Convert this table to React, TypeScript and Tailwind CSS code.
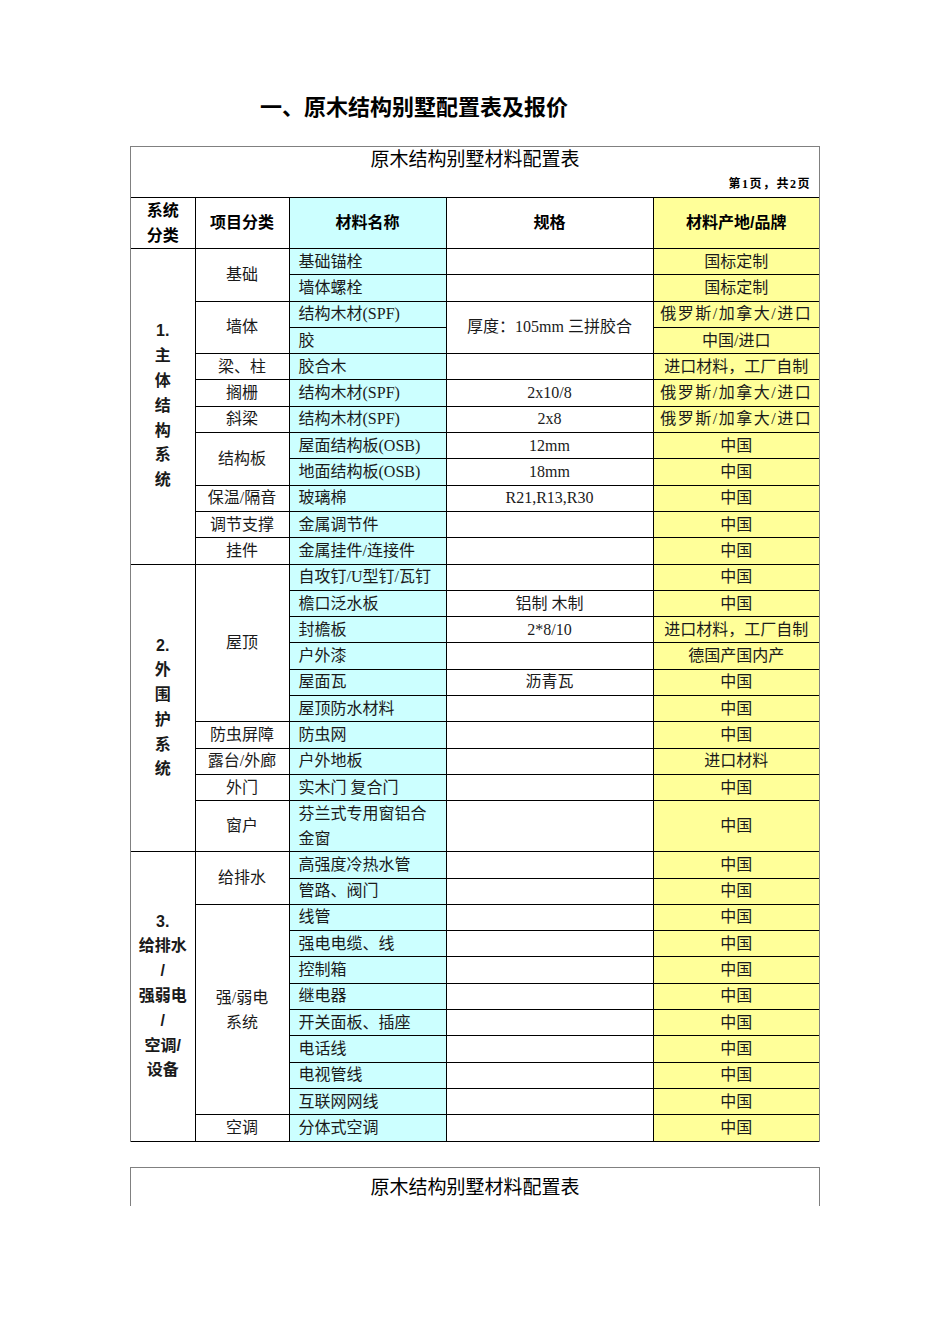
import React from "react";

const FONT = "font-['Liberation_Serif','Noto_Sans_CJK_SC',serif]";
const HEI = "font-['Liberation_Sans','Noto_Sans_CJK_SC',sans-serif]";

const td = "border border-black p-0 align-middle";
const c2 = `${td} text-center`;
const c3 = `${td} bg-[#ccffff] text-left pl-[9px]`;
const c4 = `${td} text-center`;
const c5 = `${td} border-r-0 bg-[#ffff99] text-center`;
const sec = `${td} border-l-0 text-center font-bold ${HEI} leading-[24.8px]`;

type R = {
  cat?: string;
  span?: number;
  name: React.ReactNode;
  spec?: string;
  specSpan?: number;
  skipSpec?: boolean;
  origin: string;
  tall?: boolean;
  originCls?: string;
};

function Row({ r, first }: { r: R; first?: React.ReactNode }) {
  return (
    <tr className={r.tall ? "h-[51px]" : "h-[26.3px]"}>
      {first}
      {r.cat !== undefined && (
        <td className={c2} rowSpan={r.span ?? 1}>
          {r.cat}
        </td>
      )}
      <td className={c3}>{r.name}</td>
      {!r.skipSpec && (
        <td className={c4} rowSpan={r.specSpan ?? 1}>
          {r.spec ?? ""}
        </td>
      )}
      <td className={`${c5} ${r.originCls ?? ""}`}>{r.origin}</td>
    </tr>
  );
}

const s1: R[] = [
  { cat: "基础", span: 2, name: "基础锚栓", origin: "国标定制" },
  { name: "墙体螺栓", origin: "国标定制" },
  { cat: "墙体", span: 2, name: "结构木材(SPF)", spec: "厚度：105mm 三拼胶合", specSpan: 2, origin: "俄罗斯/加拿大/进口", originCls: "tracking-[1.5px]" },
  { name: "胶", skipSpec: true, origin: "中国/进口" },
  { cat: "梁、柱", name: "胶合木", origin: "进口材料，工厂自制" },
  { cat: "搁栅", name: "结构木材(SPF)", spec: "2x10/8", origin: "俄罗斯/加拿大/进口", originCls: "tracking-[1.5px]" },
  { cat: "斜梁", name: "结构木材(SPF)", spec: "2x8", origin: "俄罗斯/加拿大/进口", originCls: "tracking-[1.5px]" },
  { cat: "结构板", span: 2, name: "屋面结构板(OSB)", spec: "12mm", origin: "中国" },
  { name: "地面结构板(OSB)", spec: "18mm", origin: "中国" },
  { cat: "保温/隔音", name: "玻璃棉", spec: "R21,R13,R30", origin: "中国" },
  { cat: "调节支撑", name: "金属调节件", origin: "中国" },
  { cat: "挂件", name: "金属挂件/连接件", origin: "中国" },
];

const s2: R[] = [
  { cat: "屋顶", span: 6, name: "自攻钉/U型钉/瓦钉", origin: "中国" },
  { name: "檐口泛水板", spec: "铝制 木制", origin: "中国" },
  { name: "封檐板", spec: "2*8/10", origin: "进口材料，工厂自制" },
  { name: "户外漆", origin: "德国产国内产" },
  { name: "屋面瓦", spec: "沥青瓦", origin: "中国" },
  { name: "屋顶防水材料", origin: "中国" },
  { cat: "防虫屏障", name: "防虫网", origin: "中国" },
  { cat: "露台/外廊", name: "户外地板", origin: "进口材料" },
  { cat: "外门", name: "实木门 复合门", origin: "中国" },
  {
    cat: "窗户",
    name: (
      <span className="block leading-[25px]">
        芬兰式专用窗铝合
        <br />
        金窗
      </span>
    ),
    origin: "中国",
    tall: true,
  },
];

const s3: R[] = [
  { cat: "给排水", span: 2, name: "高强度冷热水管", origin: "中国" },
  { name: "管路、阀门", origin: "中国" },
  { cat: "__elec", span: 8, name: "线管", origin: "中国" },
  { name: "强电电缆、线", origin: "中国" },
  { name: "控制箱", origin: "中国" },
  { name: "继电器", origin: "中国" },
  { name: "开关面板、插座", origin: "中国" },
  { name: "电话线", origin: "中国" },
  { name: "电视管线", origin: "中国" },
  { name: "互联网网线", origin: "中国" },
  { cat: "空调", name: "分体式空调", origin: "中国" },
];

function Section({ rows, label }: { rows: R[]; label: React.ReactNode }) {
  return (
    <>
      {rows.map((r, i) => {
        const first =
          i === 0 ? (
            <td className={sec} rowSpan={rows.length}>
              {label}
            </td>
          ) : undefined;
        if (r.cat === "__elec") {
          return (
            <tr key={i} className="h-[26.3px]">
              {first}
              <td className={`${c2} leading-[25px]`} rowSpan={8}>
                强/弱电
                <br />
                系统
              </td>
              <td className={c3}>{r.name}</td>
              <td className={c4}></td>
              <td className={c5}>{r.origin}</td>
            </tr>
          );
        }
        return <Row key={i} r={r} first={first} />;
      })}
    </>
  );
}

function Lines({ items }: { items: string[] }) {
  return (
    <>
      {items.map((t, i) => (
        <div key={i}>{t}</div>
      ))}
    </>
  );
}

export default function App() {
  return (
    <div className={`min-h-[1344px] w-[950px] bg-white text-black ${FONT}`}>
      <div className="pt-[93px] pl-[260px]">
        <h1 className={`text-[22px] leading-[30px] font-bold ${HEI}`}>一、原木结构别墅配置表及报价</h1>
      </div>

      <div className="mx-auto mt-[23px] w-[690px] border-l border-t border-r border-[#808080]">
        <div className="h-[51px] border-b border-black">
          <div className={`h-[26px] text-center text-[19px] leading-[26px] ${HEI}`}>原木结构别墅材料配置表</div>
          <div className={`mt-[3px] pr-[8px] text-right text-[12px] leading-[17px] font-bold tracking-[1.5px] ${FONT}`}>
            第1页，共2页
          </div>
        </div>
        <table className="w-full table-fixed border-collapse text-[16px] text-[#1a1a1a]">
          <colgroup>
            <col className="w-[64px]" />
            <col className="w-[94px]" />
            <col className="w-[157px]" />
            <col className="w-[207px]" />
            <col className="w-[166px]" />
          </colgroup>
          <tbody>
            <tr className={`h-[50px] font-bold text-black ${HEI}`}>
              <td className={`${td} border-l-0 border-t-0 text-center leading-[25px]`}>
                系统
                <br />
                分类
              </td>
              <td className={`${td} border-t-0 text-center`}>项目分类</td>
              <td className={`${td} border-t-0 bg-[#ccffff] text-center`}>材料名称</td>
              <td className={`${td} border-t-0 text-center`}>规格</td>
              <td className={`${td} border-t-0 border-r-0 bg-[#ffff99] text-center`}>材料产地/品牌</td>
            </tr>
            <Section rows={s1} label={<Lines items={["1.", "主", "体", "结", "构", "系", "统"]} />} />
            <Section rows={s2} label={<Lines items={["2.", "外", "围", "护", "系", "统"]} />} />
            <Section rows={s3} label={<Lines items={["3.", "给排水", "/", "强弱电", "/", "空调/", "设备"]} />} />
          </tbody>
        </table>
      </div>

      <div className="mx-auto mt-[25px] h-[39px] w-[690px] border-l border-t border-r border-[#808080] pt-[7px]">
        <div className={`text-center text-[19px] leading-[26px] ${HEI}`}>原木结构别墅材料配置表</div>
      </div>
    </div>
  );
}
